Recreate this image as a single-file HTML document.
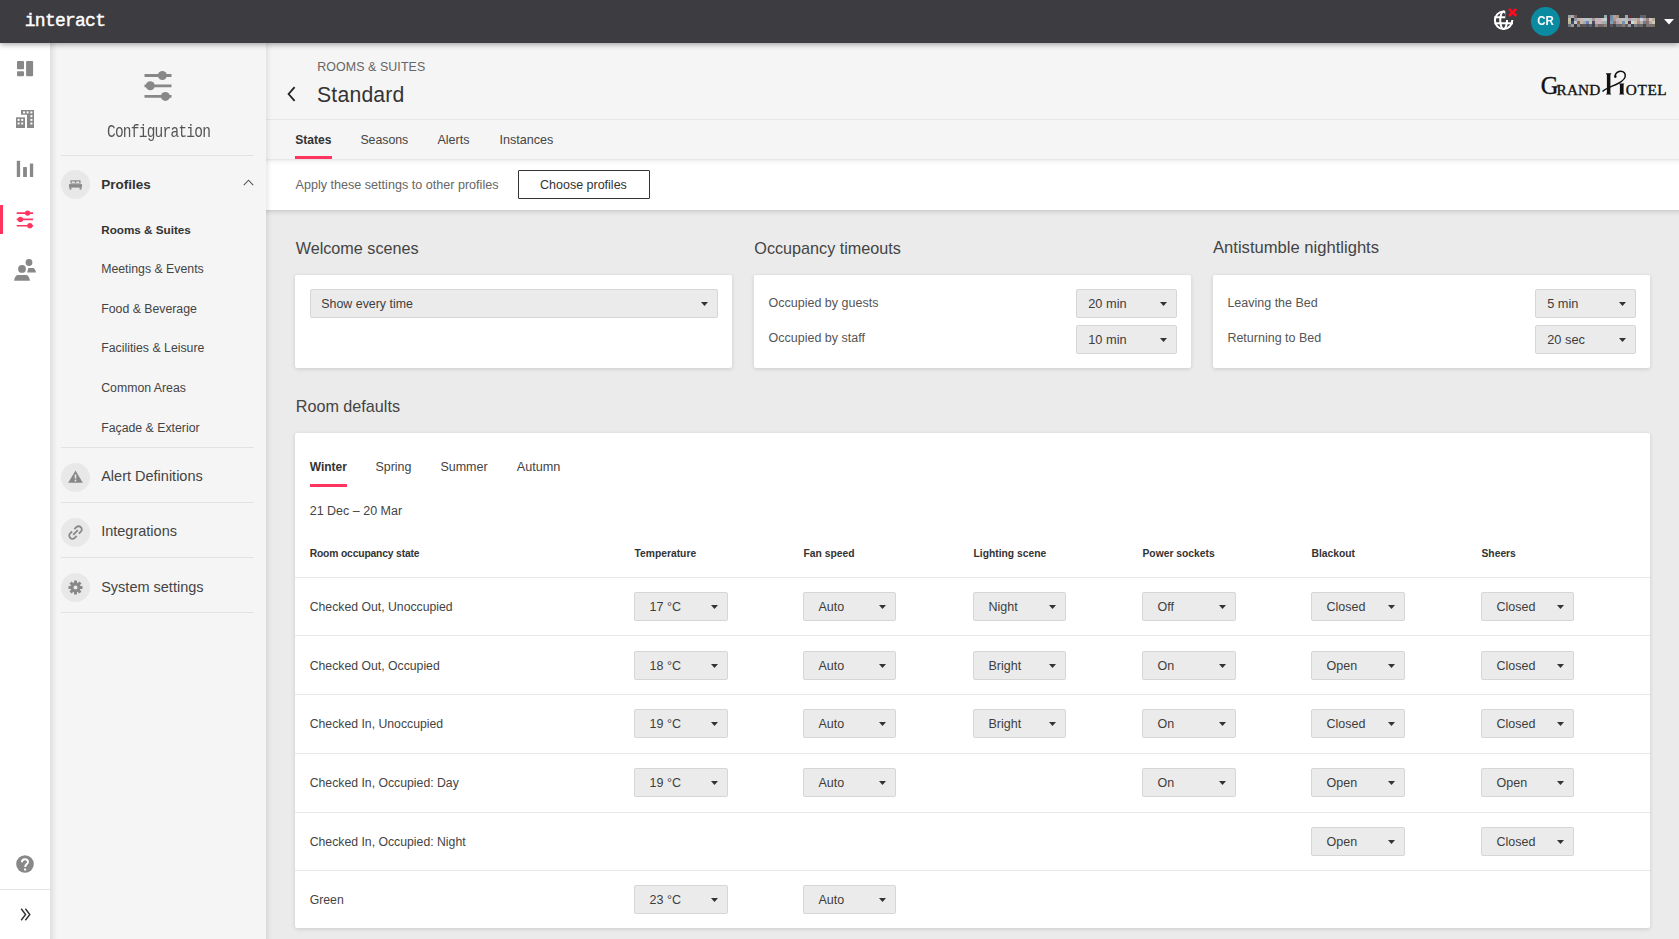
<!DOCTYPE html>
<html><head><meta charset="utf-8"><title>interact</title>
<style>
html,body{margin:0;padding:0}
body{width:1679px;height:939px;overflow:hidden;position:relative;background:#ebebeb;font-family:"Liberation Sans",sans-serif}
.t{position:absolute;white-space:nowrap;line-height:1}
.sel{position:absolute;box-sizing:border-box;background:#ebebeb;border:1px solid #d6d6d6;border-radius:2px}
</style></head><body>
<div style="position:absolute;left:0px;top:0px;width:1679px;height:43px;background:#3d3c41;z-index:5;box-shadow:0 1px 6px rgba(0,0,0,0.4)"></div>
<div style="position:absolute;white-space:nowrap;left:24.8px;top:11.2px;font-family:'Liberation Mono',monospace;font-size:18px;letter-spacing:-0.75px;color:#fff;-webkit-text-stroke:0.4px #fff;z-index:6">interact</div>
<svg style="position:absolute;left:1490px;top:6px;z-index:6" width="30" height="28" viewBox="0 0 30 28">
<defs><mask id="gm"><rect x="0" y="0" width="30" height="28" fill="#fff"/><rect x="15.3" y="0" width="15" height="14" fill="#000"/></mask></defs>
<g fill="none" stroke="#fff" stroke-width="2" mask="url(#gm)">
<circle cx="13.6" cy="14.3" r="8.7"/>
<ellipse cx="13.6" cy="14.3" rx="3.4" ry="8.7"/>
<path d="M4.5 11.3H23M4.5 17.3H23"/>
</g>
<path d="M19 2.9L26.3 10M26.3 2.9L19 10" stroke="#ff0a1e" stroke-width="2.6"/>
</svg>
<div style="position:absolute;left:1531px;top:7px;width:29px;height:29px;background:#0a8ba1;border-radius:50%;z-index:6"></div>
<div class="t" style="left:1530px;width:31px;text-align:center;top:13.66px;font-size:13.4px;color:#fff;font-weight:700;z-index:7;transform:scaleX(0.86)">CR</div>
<div style="position:absolute;left:1568px;top:15px;width:87px;height:12px;z-index:6;filter:blur(0.3px)"><div style="position:absolute;left:0px;top:0;width:3px;height:3px;background:#9aa0aa"></div><div style="position:absolute;left:0px;top:3px;width:3px;height:3px;background:#c8c0a0"></div><div style="position:absolute;left:0px;top:6px;width:3px;height:3px;background:#b8b8a0"></div><div style="position:absolute;left:0px;top:9px;width:3px;height:3px;background:#6a7480"></div><div style="position:absolute;left:3px;top:0;width:3px;height:3px;background:#a8aeb0"></div><div style="position:absolute;left:3px;top:3px;width:3px;height:3px;background:#2a3040"></div><div style="position:absolute;left:3px;top:6px;width:3px;height:3px;background:#3a5060"></div><div style="position:absolute;left:3px;top:9px;width:3px;height:3px;background:#a09888"></div><div style="position:absolute;left:6px;top:0;width:3px;height:3px;background:#7a6058"></div><div style="position:absolute;left:6px;top:3px;width:3px;height:3px;background:#8898a8"></div><div style="position:absolute;left:6px;top:6px;width:3px;height:3px;background:#c8c8d8"></div><div style="position:absolute;left:6px;top:9px;width:3px;height:3px;background:#3a3a40"></div><div style="position:absolute;left:9px;top:3px;width:3px;height:3px;background:#c0b0a8"></div><div style="position:absolute;left:9px;top:6px;width:3px;height:3px;background:#8a6838"></div><div style="position:absolute;left:9px;top:9px;width:3px;height:3px;background:#7a8890"></div><div style="position:absolute;left:12px;top:3px;width:3px;height:3px;background:#c8b8b0"></div><div style="position:absolute;left:12px;top:6px;width:3px;height:3px;background:#c0b8b0"></div><div style="position:absolute;left:12px;top:9px;width:3px;height:3px;background:#5a5250"></div><div style="position:absolute;left:15px;top:3px;width:3px;height:3px;background:#a8c8d0"></div><div style="position:absolute;left:15px;top:6px;width:3px;height:3px;background:#a8a8b0"></div><div style="position:absolute;left:15px;top:9px;width:3px;height:3px;background:#5a5a60"></div><div style="position:absolute;left:18px;top:3px;width:3px;height:3px;background:#c0c0c8"></div><div style="position:absolute;left:18px;top:6px;width:3px;height:3px;background:#7080b0"></div><div style="position:absolute;left:18px;top:9px;width:3px;height:3px;background:#4a5060"></div><div style="position:absolute;left:21px;top:3px;width:3px;height:3px;background:#b0c0c0"></div><div style="position:absolute;left:21px;top:6px;width:3px;height:3px;background:#c0c8a8"></div><div style="position:absolute;left:21px;top:9px;width:3px;height:3px;background:#5a6060"></div><div style="position:absolute;left:24px;top:3px;width:3px;height:3px;background:#a89098"></div><div style="position:absolute;left:24px;top:6px;width:3px;height:3px;background:#504860"></div><div style="position:absolute;left:24px;top:9px;width:3px;height:3px;background:#404050"></div><div style="position:absolute;left:27px;top:3px;width:3px;height:3px;background:#b8bcc0"></div><div style="position:absolute;left:27px;top:6px;width:3px;height:3px;background:#c8b0a8"></div><div style="position:absolute;left:27px;top:9px;width:3px;height:3px;background:#888c90"></div><div style="position:absolute;left:30px;top:3px;width:3px;height:3px;background:#c8b0b8"></div><div style="position:absolute;left:30px;top:6px;width:3px;height:3px;background:#c8b0c8"></div><div style="position:absolute;left:30px;top:9px;width:3px;height:3px;background:#806860"></div><div style="position:absolute;left:33px;top:3px;width:3px;height:3px;background:#c0c8c8"></div><div style="position:absolute;left:33px;top:6px;width:3px;height:3px;background:#b8b090"></div><div style="position:absolute;left:33px;top:9px;width:3px;height:3px;background:#6a7080"></div><div style="position:absolute;left:36px;top:0;width:3px;height:3px;background:#8fb0b0"></div><div style="position:absolute;left:36px;top:3px;width:3px;height:3px;background:#c8d0d0"></div><div style="position:absolute;left:36px;top:6px;width:3px;height:3px;background:#98b0b8"></div><div style="position:absolute;left:36px;top:9px;width:3px;height:3px;background:#908070"></div><div style="position:absolute;left:39px;top:0;width:3px;height:3px;background:#5a3038"></div><div style="position:absolute;left:39px;top:3px;width:3px;height:3px;background:#5a3038"></div><div style="position:absolute;left:39px;top:6px;width:3px;height:3px;background:#5a3038"></div><div style="position:absolute;left:39px;top:9px;width:3px;height:3px;background:#4a3a40"></div><div style="position:absolute;left:42px;top:0;width:3px;height:3px;background:#6f8aa5"></div><div style="position:absolute;left:42px;top:3px;width:3px;height:3px;background:#7090b0"></div><div style="position:absolute;left:42px;top:6px;width:3px;height:3px;background:#80a0b8"></div><div style="position:absolute;left:42px;top:9px;width:3px;height:3px;background:#505a68"></div><div style="position:absolute;left:45px;top:0;width:3px;height:3px;background:#b0a098"></div><div style="position:absolute;left:45px;top:3px;width:3px;height:3px;background:#b09888"></div><div style="position:absolute;left:45px;top:6px;width:3px;height:3px;background:#8a7868"></div><div style="position:absolute;left:45px;top:9px;width:3px;height:3px;background:#504040"></div><div style="position:absolute;left:48px;top:0;width:3px;height:3px;background:#a89480"></div><div style="position:absolute;left:48px;top:3px;width:3px;height:3px;background:#c0b0b8"></div><div style="position:absolute;left:48px;top:6px;width:3px;height:3px;background:#b8a0a8"></div><div style="position:absolute;left:48px;top:9px;width:3px;height:3px;background:#6a6a70"></div><div style="position:absolute;left:51px;top:3px;width:3px;height:3px;background:#b8b8c0"></div><div style="position:absolute;left:51px;top:6px;width:3px;height:3px;background:#c0b890"></div><div style="position:absolute;left:51px;top:9px;width:3px;height:3px;background:#606878"></div><div style="position:absolute;left:54px;top:3px;width:3px;height:3px;background:#b8c0c0"></div><div style="position:absolute;left:54px;top:6px;width:3px;height:3px;background:#7890b8"></div><div style="position:absolute;left:54px;top:9px;width:3px;height:3px;background:#8a7a68"></div><div style="position:absolute;left:57px;top:0;width:3px;height:3px;background:#90b0b0"></div><div style="position:absolute;left:57px;top:3px;width:3px;height:3px;background:#a8c0c0"></div><div style="position:absolute;left:57px;top:6px;width:3px;height:3px;background:#c0c8a8"></div><div style="position:absolute;left:57px;top:9px;width:3px;height:3px;background:#506070"></div><div style="position:absolute;left:60px;top:0;width:3px;height:3px;background:#5a3038"></div><div style="position:absolute;left:60px;top:3px;width:3px;height:3px;background:#b0a0b0"></div><div style="position:absolute;left:60px;top:6px;width:3px;height:3px;background:#503040"></div><div style="position:absolute;left:60px;top:9px;width:3px;height:3px;background:#9a9aa0"></div><div style="position:absolute;left:63px;top:3px;width:3px;height:3px;background:#b8b8b0"></div><div style="position:absolute;left:63px;top:6px;width:3px;height:3px;background:#c0e0e8"></div><div style="position:absolute;left:63px;top:9px;width:3px;height:3px;background:#4a4040"></div><div style="position:absolute;left:66px;top:3px;width:3px;height:3px;background:#c0b8b0"></div><div style="position:absolute;left:66px;top:6px;width:3px;height:3px;background:#d0c0a8"></div><div style="position:absolute;left:66px;top:9px;width:3px;height:3px;background:#707a88"></div><div style="position:absolute;left:69px;top:3px;width:3px;height:3px;background:#b8a0a0"></div><div style="position:absolute;left:69px;top:6px;width:3px;height:3px;background:#a89080"></div><div style="position:absolute;left:69px;top:9px;width:3px;height:3px;background:#706060"></div><div style="position:absolute;left:72px;top:0;width:3px;height:3px;background:#58687a"></div><div style="position:absolute;left:72px;top:3px;width:3px;height:3px;background:#d0d0d8"></div><div style="position:absolute;left:72px;top:6px;width:3px;height:3px;background:#b8b0a8"></div><div style="position:absolute;left:72px;top:9px;width:3px;height:3px;background:#6a6a6a"></div><div style="position:absolute;left:75px;top:0;width:3px;height:3px;background:#6e6050"></div><div style="position:absolute;left:75px;top:3px;width:3px;height:3px;background:#a8b0c0"></div><div style="position:absolute;left:75px;top:6px;width:3px;height:3px;background:#6880a0"></div><div style="position:absolute;left:75px;top:9px;width:3px;height:3px;background:#404858"></div><div style="position:absolute;left:78px;top:3px;width:3px;height:3px;background:#a08078"></div><div style="position:absolute;left:78px;top:6px;width:3px;height:3px;background:#907068"></div><div style="position:absolute;left:78px;top:9px;width:3px;height:3px;background:#807068"></div><div style="position:absolute;left:81px;top:3px;width:3px;height:3px;background:#c8c8c8"></div><div style="position:absolute;left:81px;top:6px;width:3px;height:3px;background:#a8b0b0"></div><div style="position:absolute;left:81px;top:9px;width:3px;height:3px;background:#6a7888"></div><div style="position:absolute;left:84px;top:3px;width:3px;height:3px;background:#b8b0a0"></div><div style="position:absolute;left:84px;top:6px;width:3px;height:3px;background:#d0c8b0"></div><div style="position:absolute;left:84px;top:9px;width:3px;height:3px;background:#807060"></div></div>
<svg style="position:absolute;left:1664px;top:19px;z-index:6" width="10" height="6" viewBox="0 0 10 6"><path d="M0 0H10L5 5.5Z" fill="#fff"/></svg>
<div style="position:absolute;left:0px;top:42px;width:50px;height:897px;background:#fff;z-index:3"></div>
<div style="position:absolute;left:50px;top:42px;width:7px;height:897px;background:linear-gradient(to right, rgba(0,0,0,0.09), rgba(0,0,0,0));z-index:3"></div>
<svg style="position:absolute;left:16.9px;top:60.75px;z-index:4" width="17" height="16" viewBox="0 0 17 16"><g fill="#888"><rect x="0" y="0" width="7" height="8.35" rx="0.8"/><rect x="0" y="10.35" width="7" height="4.8" rx="0.8"/><rect x="9.1" y="0" width="7" height="15.15" rx="0.8"/></g></svg>
<svg style="position:absolute;left:16px;top:110px;z-index:4" width="18" height="18" viewBox="0 0 18 18"><g fill="#888"><path d="M0 7.3H9V18H0Z"/><path d="M5 0H18V18H11V4.8H5Z"/></g><g fill="#fff"><rect x="1.6" y="8.9" width="2" height="2"/><rect x="5.2" y="8.9" width="2" height="2"/><rect x="1.6" y="12.5" width="2" height="2"/><rect x="5.2" y="12.5" width="2" height="2"/><rect x="7.0600000000000005" y="1.4" width="2" height="2"/><rect x="10.6" y="1.4" width="2" height="2"/><rect x="14.4" y="1.4" width="2" height="2"/><rect x="14.4" y="5.2" width="2" height="2"/><rect x="14.4" y="8.9" width="2" height="2"/><rect x="14.4" y="12.5" width="2" height="2"/></g></svg>
<svg style="position:absolute;left:16px;top:160px;z-index:4" width="18" height="18" viewBox="0 0 18 18"><g fill="#888"><rect x="0.8" y="0.7" width="3.3" height="16.3" rx="0.5"/><rect x="7.1" y="7" width="3.8" height="10" rx="0.5"/><rect x="13.9" y="3.4" width="3.3" height="13.6" rx="0.5"/></g></svg>
<div style="position:absolute;left:0px;top:205px;width:3px;height:29px;background:#ff3560;z-index:4"></div>
<svg style="position:absolute;left:16px;top:209px;z-index:4" width="18" height="21" viewBox="0 0 18 21"><g stroke="#ff3560" stroke-width="1.6"><path d="M0.7 4.1H17.1M0.7 10.4H17.1M0.7 16.7H17.1"/></g><g fill="#ff3560"><circle cx="11.6" cy="4.1" r="2.6"/><circle cx="4.4" cy="10.4" r="2.6"/><circle cx="13.9" cy="16.7" r="2.6"/></g></svg>
<svg style="position:absolute;left:14px;top:259px;z-index:4" width="22" height="22" viewBox="0 0 22 22"><g fill="#888"><circle cx="15" cy="3.5" r="3.4"/><circle cx="8" cy="9.9" r="3.9"/><path d="M14.4 9.1H19C20.3 9.1 21.9 11.6 21.9 13.6H13.1Z"/><path d="M3.8 16H12.3C14.2 16 15.8 19.3 15.8 21.7H0.2C0.2 19.3 1.9 16 3.8 16Z"/></g></svg>
<svg style="position:absolute;left:16px;top:854.5px;z-index:4" width="18" height="18" viewBox="0 0 18 18"><circle cx="9" cy="9" r="8.8" fill="#888"/><path d="M5.9 7.2C5.9 5.2 7.3 4.3 9 4.3C10.8 4.3 12 5.4 12 6.9C12 8.9 9.2 9.3 9.2 11.9" fill="none" stroke="#fff" stroke-width="1.9"/><rect x="8.1" y="13.5" width="2" height="2" fill="#fff"/></svg>
<div style="position:absolute;left:0px;top:889px;width:50px;height:1px;background:#e4e4e4;z-index:4"></div>
<svg style="position:absolute;left:19.5px;top:908px;z-index:4" width="11" height="13" viewBox="0 0 11 13"><g fill="none" stroke="#333" stroke-width="1.4"><path d="M1.2 0.8L5.6 6.5L1.2 12.2M5.4 0.8L9.8 6.5L5.4 12.2"/></g></svg>
<div style="position:absolute;left:50px;top:42px;width:216px;height:897px;background:#f5f5f5;z-index:1"></div>
<div style="position:absolute;left:266px;top:42px;width:6px;height:897px;background:linear-gradient(to right, rgba(0,0,0,0.08), rgba(0,0,0,0.03) 50%, rgba(0,0,0,0));z-index:4"></div>
<svg style="position:absolute;left:144px;top:70px;z-index:4" width="28" height="32" viewBox="0 0 28 32"><g stroke="#888" stroke-width="2.8"><path d="M0.5 5.5H27.5M0.5 15.8H27.5M0.5 26.4H27.5"/></g><g fill="#888"><circle cx="18.4" cy="5.5" r="4.5"/><circle cx="6.3" cy="15.8" r="4.5"/><circle cx="21.4" cy="26.4" r="4.5"/></g></svg>
<div style="position:absolute;white-space:nowrap;left:107px;top:124.6px;font-family:'Liberation Mono',monospace;font-size:14.5px;letter-spacing:-0.77px;color:#555;transform:scaleY(1.28);transform-origin:0 12.08px;z-index:2">Configuration</div>
<div style="position:absolute;left:61px;top:155px;width:193px;height:1px;background:#e2e2e2;z-index:2"></div>
<div style="position:absolute;left:61px;top:170px;width:29px;height:29px;background:#e8e8e8;border-radius:50%;z-index:2"></div>
<svg style="position:absolute;left:68.8px;top:180px;z-index:4" width="13" height="10" viewBox="0 0 13 10"><g fill="#8a8a8a"><path d="M1.4 0.3H11.6V3.6H1.4Z"/><path d="M0 4.1H13V7.6H0Z"/><rect x="0.6" y="7.3" width="1.8" height="2.3"/><rect x="10.6" y="7.3" width="1.8" height="2.3"/></g><g fill="#e8e8e8"><rect x="2.6" y="1.4" width="3.3" height="1.6" rx="0.5"/><rect x="7.1" y="1.4" width="3.3" height="1.6" rx="0.5"/></g></svg>
<div class="t" style="left:101.20px;top:177.57px;font-size:13.5px;color:#333;font-weight:700;z-index:2">Profiles</div>
<svg style="position:absolute;left:243px;top:179px;z-index:4" width="11" height="7" viewBox="0 0 11 7"><path d="M0.8 6.2L5.5 1.2L10.2 6.2" fill="none" stroke="#555" stroke-width="1.1"/></svg>
<div class="t" style="left:101.20px;top:223.85px;font-size:11.7px;color:#333;font-weight:700;z-index:2">Rooms &amp; Suites</div>
<div class="t" style="left:101.20px;top:262.69px;font-size:12.3px;color:#444;font-weight:400;z-index:2">Meetings &amp; Events</div>
<div class="t" style="left:101.20px;top:302.69px;font-size:12.3px;color:#444;font-weight:400;z-index:2">Food &amp; Beverage</div>
<div class="t" style="left:101.20px;top:341.69px;font-size:12.3px;color:#444;font-weight:400;z-index:2">Facilities &amp; Leisure</div>
<div class="t" style="left:101.20px;top:381.59px;font-size:12.3px;color:#444;font-weight:400;z-index:2">Common Areas</div>
<div class="t" style="left:101.20px;top:421.59px;font-size:12.3px;color:#444;font-weight:400;z-index:2">Façade &amp; Exterior</div>
<div style="position:absolute;left:61px;top:447px;width:193px;height:1px;background:#e2e2e2;z-index:2"></div>
<div style="position:absolute;left:61px;top:463px;width:29px;height:29px;background:#e8e8e8;border-radius:50%;z-index:2"></div>
<svg style="position:absolute;left:68px;top:470px;z-index:4" width="15" height="13" viewBox="0 0 15 13"><path d="M7.5 0.5L14.8 12.7H0.2Z" fill="#888"/><path d="M7.5 4.5V8.5" stroke="#e8e8e8" stroke-width="1.6"/><circle cx="7.5" cy="10.5" r="0.9" fill="#e8e8e8"/></svg>
<div class="t" style="left:101.20px;top:469.23px;font-size:14.5px;color:#444;font-weight:400;z-index:2">Alert Definitions</div>
<div style="position:absolute;left:61px;top:502px;width:193px;height:1px;background:#e2e2e2;z-index:2"></div>
<div style="position:absolute;left:61px;top:518px;width:29px;height:29px;background:#e8e8e8;border-radius:50%;z-index:2"></div>
<svg style="position:absolute;left:68px;top:525px;z-index:4" width="15" height="15" viewBox="0 0 15 15"><g fill="none" stroke="#888" stroke-width="1.8"><path d="M6.3 4.2L8.3 2.2C9.6 0.9 11.6 0.9 12.8 2.2C14.1 3.4 14.1 5.4 12.8 6.7L10.8 8.7"/><path d="M8.7 10.8L6.7 12.8C5.4 14.1 3.4 14.1 2.2 12.8C0.9 11.6 0.9 9.6 2.2 8.3L4.2 6.3"/><path d="M5.2 9.8L9.8 5.2"/></g></svg>
<div class="t" style="left:101.20px;top:524.13px;font-size:14.5px;color:#444;font-weight:400;z-index:2">Integrations</div>
<div style="position:absolute;left:61px;top:557px;width:193px;height:1px;background:#e2e2e2;z-index:2"></div>
<div style="position:absolute;left:61px;top:573px;width:29px;height:29px;background:#e8e8e8;border-radius:50%;z-index:2"></div>
<svg style="position:absolute;left:68px;top:580px;z-index:4" width="15" height="15" viewBox="0 0 15 15"><g transform="translate(7.5 7.5)" fill="#888"><circle r="5"/><rect x="-1.5" y="-7" width="3" height="3" transform="rotate(0)"/><rect x="-1.5" y="-7" width="3" height="3" transform="rotate(45)"/><rect x="-1.5" y="-7" width="3" height="3" transform="rotate(90)"/><rect x="-1.5" y="-7" width="3" height="3" transform="rotate(135)"/><rect x="-1.5" y="-7" width="3" height="3" transform="rotate(180)"/><rect x="-1.5" y="-7" width="3" height="3" transform="rotate(225)"/><rect x="-1.5" y="-7" width="3" height="3" transform="rotate(270)"/><rect x="-1.5" y="-7" width="3" height="3" transform="rotate(315)"/><circle r="2" fill="#e8e8e8"/></g></svg>
<div class="t" style="left:101.20px;top:579.53px;font-size:14.5px;color:#444;font-weight:400;z-index:2">System settings</div>
<div style="position:absolute;left:61px;top:612px;width:193px;height:1px;background:#e2e2e2;z-index:2"></div>
<div style="position:absolute;left:266px;top:42px;width:1413px;height:117px;background:#f5f5f5;z-index:1"></div>
<div style="position:absolute;left:266px;top:119px;width:1413px;height:1px;background:#e6e6e6;z-index:2"></div>
<div class="t" style="left:317.20px;top:60.80px;font-size:12.4px;color:#666;font-weight:400;z-index:2;letter-spacing:0.1px">ROOMS &amp; SUITES</div>
<svg style="position:absolute;left:286px;top:86px;z-index:4" width="10" height="16" viewBox="0 0 10 16"><path d="M8.6 1.2L2.6 8L8.6 14.8" fill="none" stroke="#222" stroke-width="1.8"/></svg>
<div class="t" style="left:317.00px;top:83.55px;font-size:21.2px;color:#333;font-weight:400;z-index:2;letter-spacing:0.2px">Standard</div>
<div style="font-family:'Liberation Serif',serif;font-weight:400;-webkit-text-stroke:0.35px #111;position:absolute;white-space:nowrap;line-height:1;color:#111;z-index:2;left:1540.8px;top:74.08px;font-size:24.5px">G</div>
<div style="font-family:'Liberation Serif',serif;font-weight:400;-webkit-text-stroke:0.35px #111;position:absolute;white-space:nowrap;line-height:1;color:#111;z-index:2;left:1556.6px;top:81.79px;font-size:15.3px;letter-spacing:0.1px">RAND</div>
<div style="font-family:'Liberation Serif',serif;font-weight:400;-webkit-text-stroke:0.35px #111;position:absolute;white-space:nowrap;line-height:1;color:#111;z-index:2;left:1625.8px;top:81.79px;font-size:15.3px;letter-spacing:0.6px">OTEL</div>
<svg style="position:absolute;left:1600px;top:68px;z-index:2" width="30" height="30" viewBox="0 0 30 30"><g fill="#111"><path d="M6 5.3H11.2V6.2L10.4 6.5V25.6L11.2 26V26.6H6V26L6.9 25.6V6.5L6 6.2Z"/><path d="M19.2 15.5H24.2V16.1L23.6 16.4V25.6L24.2 26V26.6H19.2V26L19.9 25.6V16.4L19.2 16.1Z"/></g><path d="M2.5 23.5C6 20 12 18.5 18 15.5C23 13 26 10.5 25.2 6.5C24.5 3.8 21.5 2.5 19 3.5C16.5 4.5 15 6.5 15.2 8.5" fill="none" stroke="#111" stroke-width="1.5"/><circle cx="15.3" cy="8.6" r="1.3" fill="#111"/></svg>
<div class="t" style="left:295.20px;top:133.96px;font-size:12.1px;color:#333;font-weight:700;z-index:2">States</div>
<div class="t" style="left:360.40px;top:133.79px;font-size:12.3px;color:#444;font-weight:400;z-index:2">Seasons</div>
<div class="t" style="left:437.50px;top:133.62px;font-size:12.5px;color:#444;font-weight:400;z-index:2">Alerts</div>
<div class="t" style="left:499.50px;top:133.53px;font-size:12.6px;color:#444;font-weight:400;z-index:2">Instances</div>
<div style="position:absolute;left:295px;top:156px;width:37px;height:3px;background:#ff3560;z-index:2"></div>
<div style="position:absolute;left:266px;top:159px;width:1413px;height:51px;background:#fff;z-index:2"></div>
<div style="position:absolute;left:266px;top:210px;width:1413px;height:6px;background:linear-gradient(to bottom, rgba(0,0,0,0.13), rgba(0,0,0,0.05) 40%, rgba(0,0,0,0));z-index:2"></div>
<div style="position:absolute;left:266px;top:159px;width:1413px;height:6px;background:linear-gradient(to bottom, rgba(0,0,0,0.11), rgba(0,0,0,0.04) 35%, rgba(0,0,0,0));z-index:3"></div>
<div class="t" style="left:295.50px;top:179.13px;font-size:12.6px;color:#666;font-weight:400;z-index:3">Apply these settings to other profiles</div>
<div style="position:absolute;left:518px;top:170px;width:130px;height:27px;border:1px solid #333;background:#fff;z-index:3;border-radius:1px"></div>
<div class="t" style="left:540.00px;top:179.22px;font-size:12.5px;color:#333;font-weight:400;z-index:3">Choose profiles</div>
<div class="t" style="left:295.70px;top:239.99px;font-size:16.2px;color:#444;font-weight:400;">Welcome scenes</div>
<div class="t" style="left:754.30px;top:239.99px;font-size:16.2px;color:#444;font-weight:400;">Occupancy timeouts</div>
<div class="t" style="left:1213.00px;top:239.65px;font-size:16.6px;color:#444;font-weight:400;">Antistumble nightlights</div>
<div style="position:absolute;left:295px;top:275px;width:437px;height:93px;background:#fff;border-radius:2px;box-shadow:0 1px 4px rgba(0,0,0,0.14)"></div>
<div style="position:absolute;left:754px;top:275px;width:437px;height:93px;background:#fff;border-radius:2px;box-shadow:0 1px 4px rgba(0,0,0,0.14)"></div>
<div style="position:absolute;left:1213px;top:275px;width:437px;height:93px;background:#fff;border-radius:2px;box-shadow:0 1px 4px rgba(0,0,0,0.14)"></div>
<div class="sel" style="left:310px;top:289px;width:408px;height:29px"><div class="t" style="left:10.3px;top:8.00px;font-size:12.4px;color:#3d3d3d">Show every time</div><svg width="7" height="4" viewBox="0 0 7 4" style="position:absolute;right:9px;top:12.0px"><path d="M0 0H7L3.5 4Z" fill="#333"/></svg></div>
<div class="t" style="left:768.60px;top:296.62px;font-size:12.5px;color:#555;font-weight:400;">Occupied by guests</div>
<div class="t" style="left:768.60px;top:332.42px;font-size:12.5px;color:#555;font-weight:400;">Occupied by staff</div>
<div class="sel" style="left:1076px;top:289px;width:101px;height:29px"><div class="t" style="left:11.2px;top:7.66px;font-size:12.8px;color:#3d3d3d">20 min</div><svg width="7" height="4" viewBox="0 0 7 4" style="position:absolute;right:9px;top:12.0px"><path d="M0 0H7L3.5 4Z" fill="#333"/></svg></div>
<div class="sel" style="left:1076px;top:325px;width:101px;height:29px"><div class="t" style="left:11.2px;top:7.66px;font-size:12.8px;color:#3d3d3d">10 min</div><svg width="7" height="4" viewBox="0 0 7 4" style="position:absolute;right:9px;top:12.0px"><path d="M0 0H7L3.5 4Z" fill="#333"/></svg></div>
<div class="t" style="left:1227.40px;top:296.62px;font-size:12.5px;color:#555;font-weight:400;">Leaving the Bed</div>
<div class="t" style="left:1227.40px;top:332.42px;font-size:12.5px;color:#555;font-weight:400;">Returning to Bed</div>
<div class="sel" style="left:1535px;top:289px;width:101px;height:29px"><div class="t" style="left:11.2px;top:7.66px;font-size:12.8px;color:#3d3d3d">5 min</div><svg width="7" height="4" viewBox="0 0 7 4" style="position:absolute;right:9px;top:12.0px"><path d="M0 0H7L3.5 4Z" fill="#333"/></svg></div>
<div class="sel" style="left:1535px;top:325px;width:101px;height:29px"><div class="t" style="left:11.2px;top:7.66px;font-size:12.8px;color:#3d3d3d">20 sec</div><svg width="7" height="4" viewBox="0 0 7 4" style="position:absolute;right:9px;top:12.0px"><path d="M0 0H7L3.5 4Z" fill="#333"/></svg></div>
<div class="t" style="left:295.70px;top:397.69px;font-size:16.2px;color:#444;font-weight:400;">Room defaults</div>
<div style="position:absolute;left:295px;top:433px;width:1355px;height:495px;background:#fff;border-radius:2px;box-shadow:0 1px 4px rgba(0,0,0,0.14)"></div>
<div class="t" style="left:309.70px;top:461.34px;font-size:12.0px;color:#333;font-weight:700;">Winter</div>
<div class="t" style="left:375.50px;top:460.96px;font-size:12.45px;color:#444;font-weight:400;">Spring</div>
<div class="t" style="left:440.40px;top:460.92px;font-size:12.5px;color:#444;font-weight:400;">Summer</div>
<div class="t" style="left:516.70px;top:460.75px;font-size:12.7px;color:#444;font-weight:400;">Autumn</div>
<div style="position:absolute;left:310px;top:484px;width:37px;height:3px;background:#ff3560"></div>
<div class="t" style="left:309.70px;top:504.62px;font-size:12.5px;color:#444;font-weight:400;">21 Dec – 20 Mar</div>
<div class="t" style="left:309.70px;top:549.28px;font-size:10.3px;color:#333;font-weight:700;letter-spacing:-0.15px">Room occupancy state</div>
<div class="t" style="left:634.50px;top:549.28px;font-size:10.3px;color:#333;font-weight:700;">Temperature</div>
<div class="t" style="left:803.50px;top:549.28px;font-size:10.3px;color:#333;font-weight:700;">Fan speed</div>
<div class="t" style="left:973.50px;top:549.28px;font-size:10.3px;color:#333;font-weight:700;">Lighting scene</div>
<div class="t" style="left:1142.50px;top:549.28px;font-size:10.3px;color:#333;font-weight:700;">Power sockets</div>
<div class="t" style="left:1311.50px;top:549.28px;font-size:10.3px;color:#333;font-weight:700;">Blackout</div>
<div class="t" style="left:1481.50px;top:549.28px;font-size:10.3px;color:#333;font-weight:700;">Sheers</div>
<div style="position:absolute;left:295px;top:577px;width:1355px;height:1px;background:#e8e8e8"></div>
<div style="position:absolute;left:295px;top:635px;width:1355px;height:1px;background:#e8e8e8"></div>
<div style="position:absolute;left:295px;top:694px;width:1355px;height:1px;background:#e8e8e8"></div>
<div style="position:absolute;left:295px;top:753px;width:1355px;height:1px;background:#e8e8e8"></div>
<div style="position:absolute;left:295px;top:812px;width:1355px;height:1px;background:#e8e8e8"></div>
<div style="position:absolute;left:295px;top:870px;width:1355px;height:1px;background:#e8e8e8"></div>
<div class="t" style="left:309.70px;top:600.63px;font-size:12.25px;color:#444;font-weight:400;">Checked Out, Unoccupied</div>
<div class="sel" style="left:634px;top:592px;width:94px;height:29px"><div class="t" style="left:14.5px;top:7.92px;font-size:12.5px;color:#3d3d3d">17 °C</div><svg width="7" height="4" viewBox="0 0 7 4" style="position:absolute;right:9px;top:12.0px"><path d="M0 0H7L3.5 4Z" fill="#333"/></svg></div>
<div class="sel" style="left:803px;top:592px;width:93px;height:29px"><div class="t" style="left:14.5px;top:7.92px;font-size:12.5px;color:#3d3d3d">Auto</div><svg width="7" height="4" viewBox="0 0 7 4" style="position:absolute;right:9px;top:12.0px"><path d="M0 0H7L3.5 4Z" fill="#333"/></svg></div>
<div class="sel" style="left:973px;top:592px;width:93px;height:29px"><div class="t" style="left:14.5px;top:7.92px;font-size:12.5px;color:#3d3d3d">Night</div><svg width="7" height="4" viewBox="0 0 7 4" style="position:absolute;right:9px;top:12.0px"><path d="M0 0H7L3.5 4Z" fill="#333"/></svg></div>
<div class="sel" style="left:1142px;top:592px;width:94px;height:29px"><div class="t" style="left:14.5px;top:7.92px;font-size:12.5px;color:#3d3d3d">Off</div><svg width="7" height="4" viewBox="0 0 7 4" style="position:absolute;right:9px;top:12.0px"><path d="M0 0H7L3.5 4Z" fill="#333"/></svg></div>
<div class="sel" style="left:1311px;top:592px;width:94px;height:29px"><div class="t" style="left:14.5px;top:7.92px;font-size:12.5px;color:#3d3d3d">Closed</div><svg width="7" height="4" viewBox="0 0 7 4" style="position:absolute;right:9px;top:12.0px"><path d="M0 0H7L3.5 4Z" fill="#333"/></svg></div>
<div class="sel" style="left:1481px;top:592px;width:93px;height:29px"><div class="t" style="left:14.5px;top:7.92px;font-size:12.5px;color:#3d3d3d">Closed</div><svg width="7" height="4" viewBox="0 0 7 4" style="position:absolute;right:9px;top:12.0px"><path d="M0 0H7L3.5 4Z" fill="#333"/></svg></div>
<div class="t" style="left:309.70px;top:659.63px;font-size:12.25px;color:#444;font-weight:400;">Checked Out, Occupied</div>
<div class="sel" style="left:634px;top:651px;width:94px;height:29px"><div class="t" style="left:14.5px;top:7.92px;font-size:12.5px;color:#3d3d3d">18 °C</div><svg width="7" height="4" viewBox="0 0 7 4" style="position:absolute;right:9px;top:12.0px"><path d="M0 0H7L3.5 4Z" fill="#333"/></svg></div>
<div class="sel" style="left:803px;top:651px;width:93px;height:29px"><div class="t" style="left:14.5px;top:7.92px;font-size:12.5px;color:#3d3d3d">Auto</div><svg width="7" height="4" viewBox="0 0 7 4" style="position:absolute;right:9px;top:12.0px"><path d="M0 0H7L3.5 4Z" fill="#333"/></svg></div>
<div class="sel" style="left:973px;top:651px;width:93px;height:29px"><div class="t" style="left:14.5px;top:7.92px;font-size:12.5px;color:#3d3d3d">Bright</div><svg width="7" height="4" viewBox="0 0 7 4" style="position:absolute;right:9px;top:12.0px"><path d="M0 0H7L3.5 4Z" fill="#333"/></svg></div>
<div class="sel" style="left:1142px;top:651px;width:94px;height:29px"><div class="t" style="left:14.5px;top:7.92px;font-size:12.5px;color:#3d3d3d">On</div><svg width="7" height="4" viewBox="0 0 7 4" style="position:absolute;right:9px;top:12.0px"><path d="M0 0H7L3.5 4Z" fill="#333"/></svg></div>
<div class="sel" style="left:1311px;top:651px;width:94px;height:29px"><div class="t" style="left:14.5px;top:7.92px;font-size:12.5px;color:#3d3d3d">Open</div><svg width="7" height="4" viewBox="0 0 7 4" style="position:absolute;right:9px;top:12.0px"><path d="M0 0H7L3.5 4Z" fill="#333"/></svg></div>
<div class="sel" style="left:1481px;top:651px;width:93px;height:29px"><div class="t" style="left:14.5px;top:7.92px;font-size:12.5px;color:#3d3d3d">Closed</div><svg width="7" height="4" viewBox="0 0 7 4" style="position:absolute;right:9px;top:12.0px"><path d="M0 0H7L3.5 4Z" fill="#333"/></svg></div>
<div class="t" style="left:309.70px;top:717.63px;font-size:12.25px;color:#444;font-weight:400;">Checked In, Unoccupied</div>
<div class="sel" style="left:634px;top:709px;width:94px;height:29px"><div class="t" style="left:14.5px;top:7.92px;font-size:12.5px;color:#3d3d3d">19 °C</div><svg width="7" height="4" viewBox="0 0 7 4" style="position:absolute;right:9px;top:12.0px"><path d="M0 0H7L3.5 4Z" fill="#333"/></svg></div>
<div class="sel" style="left:803px;top:709px;width:93px;height:29px"><div class="t" style="left:14.5px;top:7.92px;font-size:12.5px;color:#3d3d3d">Auto</div><svg width="7" height="4" viewBox="0 0 7 4" style="position:absolute;right:9px;top:12.0px"><path d="M0 0H7L3.5 4Z" fill="#333"/></svg></div>
<div class="sel" style="left:973px;top:709px;width:93px;height:29px"><div class="t" style="left:14.5px;top:7.92px;font-size:12.5px;color:#3d3d3d">Bright</div><svg width="7" height="4" viewBox="0 0 7 4" style="position:absolute;right:9px;top:12.0px"><path d="M0 0H7L3.5 4Z" fill="#333"/></svg></div>
<div class="sel" style="left:1142px;top:709px;width:94px;height:29px"><div class="t" style="left:14.5px;top:7.92px;font-size:12.5px;color:#3d3d3d">On</div><svg width="7" height="4" viewBox="0 0 7 4" style="position:absolute;right:9px;top:12.0px"><path d="M0 0H7L3.5 4Z" fill="#333"/></svg></div>
<div class="sel" style="left:1311px;top:709px;width:94px;height:29px"><div class="t" style="left:14.5px;top:7.92px;font-size:12.5px;color:#3d3d3d">Closed</div><svg width="7" height="4" viewBox="0 0 7 4" style="position:absolute;right:9px;top:12.0px"><path d="M0 0H7L3.5 4Z" fill="#333"/></svg></div>
<div class="sel" style="left:1481px;top:709px;width:93px;height:29px"><div class="t" style="left:14.5px;top:7.92px;font-size:12.5px;color:#3d3d3d">Closed</div><svg width="7" height="4" viewBox="0 0 7 4" style="position:absolute;right:9px;top:12.0px"><path d="M0 0H7L3.5 4Z" fill="#333"/></svg></div>
<div class="t" style="left:309.70px;top:776.63px;font-size:12.25px;color:#444;font-weight:400;">Checked In, Occupied: Day</div>
<div class="sel" style="left:634px;top:768px;width:94px;height:29px"><div class="t" style="left:14.5px;top:7.92px;font-size:12.5px;color:#3d3d3d">19 °C</div><svg width="7" height="4" viewBox="0 0 7 4" style="position:absolute;right:9px;top:12.0px"><path d="M0 0H7L3.5 4Z" fill="#333"/></svg></div>
<div class="sel" style="left:803px;top:768px;width:93px;height:29px"><div class="t" style="left:14.5px;top:7.92px;font-size:12.5px;color:#3d3d3d">Auto</div><svg width="7" height="4" viewBox="0 0 7 4" style="position:absolute;right:9px;top:12.0px"><path d="M0 0H7L3.5 4Z" fill="#333"/></svg></div>
<div class="sel" style="left:1142px;top:768px;width:94px;height:29px"><div class="t" style="left:14.5px;top:7.92px;font-size:12.5px;color:#3d3d3d">On</div><svg width="7" height="4" viewBox="0 0 7 4" style="position:absolute;right:9px;top:12.0px"><path d="M0 0H7L3.5 4Z" fill="#333"/></svg></div>
<div class="sel" style="left:1311px;top:768px;width:94px;height:29px"><div class="t" style="left:14.5px;top:7.92px;font-size:12.5px;color:#3d3d3d">Open</div><svg width="7" height="4" viewBox="0 0 7 4" style="position:absolute;right:9px;top:12.0px"><path d="M0 0H7L3.5 4Z" fill="#333"/></svg></div>
<div class="sel" style="left:1481px;top:768px;width:93px;height:29px"><div class="t" style="left:14.5px;top:7.92px;font-size:12.5px;color:#3d3d3d">Open</div><svg width="7" height="4" viewBox="0 0 7 4" style="position:absolute;right:9px;top:12.0px"><path d="M0 0H7L3.5 4Z" fill="#333"/></svg></div>
<div class="t" style="left:309.70px;top:835.63px;font-size:12.25px;color:#444;font-weight:400;">Checked In, Occupied: Night</div>
<div class="sel" style="left:1311px;top:827px;width:94px;height:29px"><div class="t" style="left:14.5px;top:7.92px;font-size:12.5px;color:#3d3d3d">Open</div><svg width="7" height="4" viewBox="0 0 7 4" style="position:absolute;right:9px;top:12.0px"><path d="M0 0H7L3.5 4Z" fill="#333"/></svg></div>
<div class="sel" style="left:1481px;top:827px;width:93px;height:29px"><div class="t" style="left:14.5px;top:7.92px;font-size:12.5px;color:#3d3d3d">Closed</div><svg width="7" height="4" viewBox="0 0 7 4" style="position:absolute;right:9px;top:12.0px"><path d="M0 0H7L3.5 4Z" fill="#333"/></svg></div>
<div class="t" style="left:309.70px;top:893.63px;font-size:12.25px;color:#444;font-weight:400;">Green</div>
<div class="sel" style="left:634px;top:885px;width:94px;height:29px"><div class="t" style="left:14.5px;top:7.92px;font-size:12.5px;color:#3d3d3d">23 °C</div><svg width="7" height="4" viewBox="0 0 7 4" style="position:absolute;right:9px;top:12.0px"><path d="M0 0H7L3.5 4Z" fill="#333"/></svg></div>
<div class="sel" style="left:803px;top:885px;width:93px;height:29px"><div class="t" style="left:14.5px;top:7.92px;font-size:12.5px;color:#3d3d3d">Auto</div><svg width="7" height="4" viewBox="0 0 7 4" style="position:absolute;right:9px;top:12.0px"><path d="M0 0H7L3.5 4Z" fill="#333"/></svg></div>
</body></html>
